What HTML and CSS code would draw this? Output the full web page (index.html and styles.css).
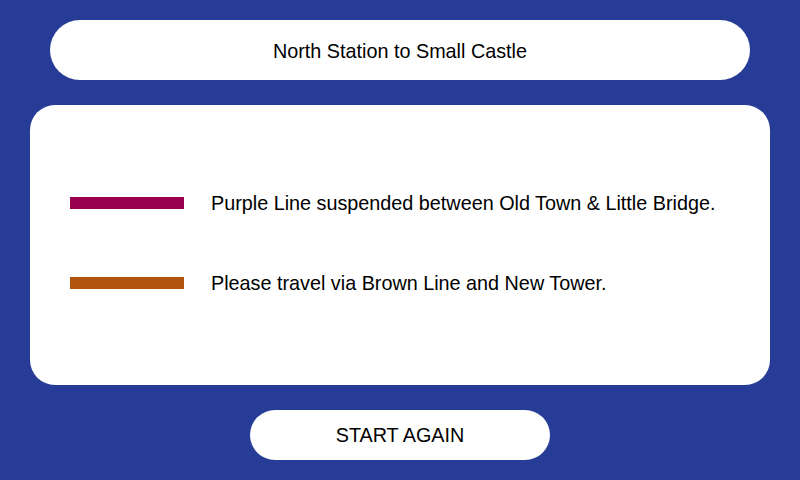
FILE: index.html
```html
<!DOCTYPE html>
<html lang="en">
<head>
    <meta charset="UTF-8">
    <meta name="viewport" content="width=device-width, initial-scale=1.0">
    <title>Journey</title>
    <link rel="stylesheet" href="styles.css">
</head>
<body>
    <div class="journey-title">North Station to Small Castle</div>
    <div class="notice-card">
        <div class="notice-row">
            <span class="line-bar purple"></span>
            <span class="notice-text">Purple Line suspended between Old Town &amp; Little Bridge.</span>
        </div>
        <div class="notice-row">
            <span class="line-bar brown"></span>
            <span class="notice-text">Please travel via Brown Line and New Tower.</span>
        </div>
    </div>
    <button class="restart-btn">START AGAIN</button>
</body>
</html>
```

FILE: styles.css
```css
body {
    background-color: #263c96;
    font-family: "Liberation Sans", Arial, sans-serif;
    margin: 0;
    padding: 20px 30px 0;
    width: 800px;
    height: 480px;
    box-sizing: border-box;
    display: flex;
    flex-direction: column;
    align-items: center;
    overflow: hidden;
}
.journey-title {
    background-color: #ffffff;
    width: 700px;
    height: 60px;
    border-radius: 30px;
    display: flex;
    justify-content: center;
    align-items: center;
    padding-top: 2px;
    box-sizing: border-box;
    font-size: 19.8px;
    color: #000000;
}
.notice-card {
    background-color: #ffffff;
    width: 740px;
    height: 280px;
    margin-top: 25px;
    border-radius: 25px;
    padding: 0 40px 4px;
    box-sizing: border-box;
    display: flex;
    flex-direction: column;
    justify-content: center;
    gap: 68px;
}
.notice-row {
    display: flex;
    align-items: center;
    height: 12px;
}
.line-bar {
    width: 114px;
    height: 12px;
    flex-shrink: 0;
    margin-right: 27px;
}
.line-bar.purple {
    background-color: #99004f;
}
.line-bar.brown {
    background-color: #b05410;
}
.notice-text {
    font-size: 19.8px;
    color: #000000;
    white-space: nowrap;
}
.restart-btn {
    width: 300px;
    height: 50px;
    margin-top: 25px;
    border: none;
    border-radius: 25px;
    background-color: #ffffff;
    font-family: "Liberation Sans", Arial, sans-serif;
    font-size: 19.8px;
    color: #000000;
    padding: 0;
}
```
